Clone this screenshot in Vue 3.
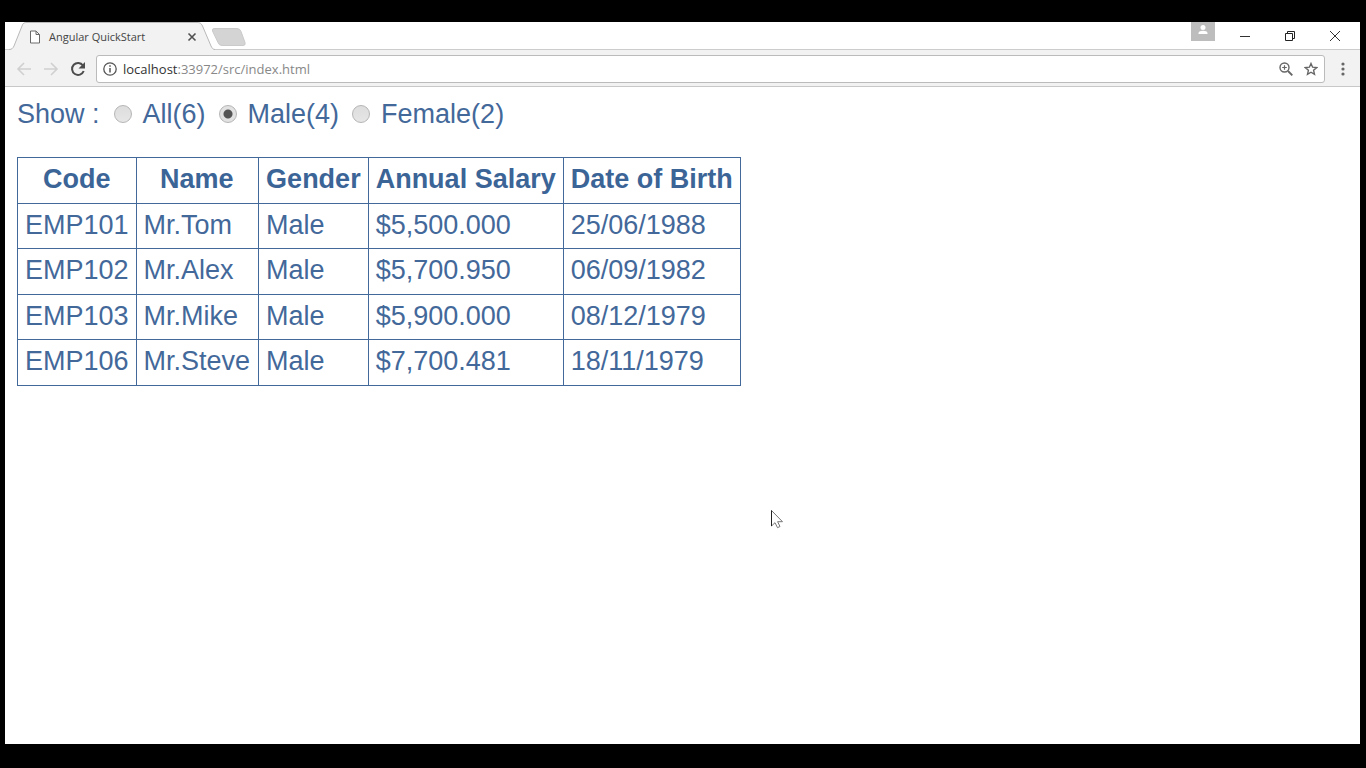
<script setup>
import { computed, ref } from 'vue'

const employees = [
  { code: 'EMP101', name: 'Mr.Tom', gender: 'Male', salary: '$5,500.000', birth: '25/06/1988' },
  { code: 'EMP102', name: 'Mr.Alex', gender: 'Male', salary: '$5,700.950', birth: '06/09/1982' },
  { code: 'EMP103', name: 'Mr.Mike', gender: 'Male', salary: '$5,900.000', birth: '08/12/1979' },
  { code: 'EMP106', name: 'Mr.Steve', gender: 'Male', salary: '$7,700.481', birth: '18/11/1979' },
]
const options = [
  { value: 'All', count: 6 },
  { value: 'Male', count: 4 },
  { value: 'Female', count: 2 },
]
const selected = ref('Male')
const rows = computed(() =>
  selected.value === 'All' ? employees : employees.filter((e) => e.gender === selected.value),
)
</script>

<template>
  <div class="screen">
    <div class="window">
      <header class="tabstrip">
        <div class="tab">
          <svg class="tab-shape" viewBox="0 0 206 28" aria-hidden="true">
            <path d="M0 27.500C3 27.500 4 26 5 24L13 4C14 1 15 .5 18 .5H188C191 .5 192 1 193.500 4L202 24C203 26 204 27.500 206 27.500V28H0Z" fill="#f2f2f2" />
            <path d="M0 27.500C3 27.500 4 26 5 24L13 4C14 1 15 .5 18 .5H188C191 .5 192 1 193.500 4L202 24C203 26 204 27.500 206 27.500" fill="none" stroke="#b9b9b9" />
          </svg>
          <svg class="page-icon" viewBox="0 0 12 14" aria-hidden="true">
            <path d="M1.500 1H7l3.500 3.500V13h-9ZM7 1v3.500h3.500" fill="#fff" stroke="#6a6a6a" />
          </svg>
          <span class="tab-title">Angular QuickStart</span>
          <button class="tab-close" aria-label="Close tab">
            <svg viewBox="0 0 10 10" width="10" height="10"><path d="M1.500 1.500l7 7M8.500 1.500l-7 7" stroke="#505050" stroke-width="1.600" /></svg>
          </button>
        </div>
        <button class="new-tab" aria-label="New tab">
          <svg viewBox="0 0 36 18" width="36" height="18"><path d="M3 .5H26q3 0 4 3l4 11q1 3-2 3H11q-3 0-4-3L1.500 3Q1 .5 3 .5Z" fill="#d4d4d4" stroke="#cacaca" /></svg>
        </button>
        <div class="controls">
          <button class="user" aria-label="Profile">
            <svg viewBox="0 0 24 19" width="24" height="19"><circle cx="12" cy="5.500" r="2.500" fill="#fff" /><path d="M7.500 12V11c0-3 9-3 9 0v1Z" fill="#fff" /></svg>
          </button>
          <button class="win" aria-label="Minimize">
            <svg viewBox="0 0 12 12" width="12" height="12"><path d="M1 6.500h10" stroke="#333" /></svg>
          </button>
          <button class="win" aria-label="Restore">
            <svg viewBox="0 0 12 12" width="12" height="12"><path d="M1.500 3.500h7v7h-7ZM3.500 3.500v-2h7v7h-2" fill="none" stroke="#222" /></svg>
          </button>
          <button class="win" aria-label="Close">
            <svg viewBox="0 0 12 12" width="12" height="12"><path d="M1 1l10 10M11 1L1 11" stroke="#333" /></svg>
          </button>
        </div>
      </header>

      <nav class="toolbar">
        <button class="tool" aria-label="Back">
          <svg viewBox="0 0 16 16" width="16" height="16"><path d="M15 8H2M8 2L2 8l6 6" fill="none" stroke="#d0d0d0" stroke-width="1.600" /></svg>
        </button>
        <button class="tool" aria-label="Forward">
          <svg viewBox="0 0 16 16" width="16" height="16"><path d="M1 8h13M8 2l6 6-6 6" fill="none" stroke="#d0d0d0" stroke-width="1.600" /></svg>
        </button>
        <button class="tool" aria-label="Reload">
          <svg viewBox="0 0 16 16" width="16" height="16"><path d="M13 4.500A6 6 0 1 0 13.700 10" fill="none" stroke="#4c4c4c" stroke-width="2" /><path d="M15 1v6.500H8.500Z" fill="#4c4c4c" /></svg>
        </button>
        <div class="address">
          <svg viewBox="0 0 14 14" width="14" height="14" aria-hidden="true"><circle cx="7" cy="7" r="6.200" fill="none" stroke="#555" stroke-width="1.300" /><path d="M7 6v4.500M7 3.300v1.500" stroke="#555" stroke-width="1.500" /></svg>
          <a class="url" href="#"><span class="host">localhost</span>:33972/src/index.html</a>
          <button class="tool" aria-label="Zoom">
            <svg viewBox="0 0 14 14" width="14" height="14"><circle cx="5.500" cy="5.500" r="4.500" fill="none" stroke="#666" stroke-width="1.400" /><path d="M9 9l4.300 4.300" stroke="#666" stroke-width="1.900" /><path d="M3.200 5.500h4.600M5.500 3.200v4.600" stroke="#666" stroke-width="1.200" /></svg>
          </button>
          <button class="tool" aria-label="Bookmark">
            <svg viewBox="0 0 14 14" width="14" height="14"><path d="M7 1.500l1.600 3.700 4.100.4-3.100 2.700.9 4L7 10.200l-3.500 2.100.9-4-3.100-2.700 4.100-.4Z" fill="none" stroke="#666" stroke-width="1.400" /></svg>
          </button>
        </div>
        <button class="tool menu" aria-label="Menu">
          <svg viewBox="0 0 4 14" width="4" height="14"><circle cx="2" cy="2" r="1.600" fill="#666" /><circle cx="2" cy="7" r="1.600" fill="#666" /><circle cx="2" cy="12" r="1.600" fill="#666" /></svg>
        </button>
      </nav>

      <main class="page">
        <div class="filter">
          <span class="caption">Show :</span>
          <label v-for="o in options" :key="o.value" class="option">
            <input v-model="selected" type="radio" name="gender" :value="o.value" />
            <span>{{ o.value }}({{ o.count }})</span>
          </label>
        </div>
        <table>
          <thead>
            <tr>
              <th>Code</th>
              <th>Name</th>
              <th>Gender</th>
              <th>Annual Salary</th>
              <th>Date of Birth</th>
            </tr>
          </thead>
          <tbody>
            <tr v-for="e in rows" :key="e.code">
              <td>{{ e.code }}</td>
              <td>{{ e.name }}</td>
              <td>{{ e.gender }}</td>
              <td>{{ e.salary }}</td>
              <td>{{ e.birth }}</td>
            </tr>
          </tbody>
        </table>
      </main>
    </div>
    <svg class="pointer" viewBox="0 0 14 20" aria-hidden="true">
      <path d="M1.500 1.500V17l3.500-3.300 2.500 5 2.500-1.200-2.400-4.800h4.900Z" fill="#fff" stroke="#777" />
      <path d="M1.500 1.500V17" stroke="#222" />
    </svg>
  </div>
</template>

<style>
body {
  margin: 0;
  background: #000;
}
</style>

<style scoped>
.screen {
  box-sizing: border-box;
  position: relative;
  display: flex;
  min-height: 100vh;
  padding: 22px 6px 24px 5px;
  background: #000;
}
.window {
  display: flex;
  flex: 1;
  flex-direction: column;
  background: #fff;
}
button {
  display: flex;
  align-items: center;
  justify-content: center;
  padding: 0;
  border: 0;
  background: none;
}
.tabstrip {
  display: flex;
  box-sizing: border-box;
  height: 28px;
  border-bottom: 1px solid #ccc;
}
.tab {
  position: relative;
  display: flex;
  align-items: center;
  box-sizing: border-box;
  width: 206px;
  height: 28px;
  margin-left: 4px;
  padding: 1px 18px 0 20px;
}
.tab-shape {
  position: absolute;
  inset: 0;
}
.page-icon {
  position: relative;
  width: 12px;
  height: 14px;
  margin-right: 8px;
}
.tab-title {
  position: relative;
  flex: 1;
  color: #444;
  font: 11px/16px "Open Sans", "Noto Sans", sans-serif;
  white-space: nowrap;
}
.tab-close {
  position: relative;
}
.new-tab {
  height: 30px;
  margin-left: -4px;
}
.controls {
  display: flex;
  align-items: center;
  margin-right: 3px;
  margin-left: auto;
}
.user {
  align-self: flex-start;
  margin-right: 7px;
  background: #bdbdbd;
}
.win {
  width: 45px;
  height: 28px;
}
.toolbar {
  display: flex;
  align-items: center;
  box-sizing: border-box;
  height: 37px;
  padding: 1px 15px 0 11px;
  border-bottom: 1px solid #c8c8c8;
  background: #f2f2f2;
  gap: 11px;
}
.address {
  display: flex;
  align-items: center;
  box-sizing: border-box;
  flex: 1;
  height: 28px;
  margin-left: -1px;
  padding: 0 6px;
  border: 1px solid #bbb;
  border-radius: 3px;
  background: #fff;
  gap: 11px;
}
.url {
  flex: 1;
  margin-left: -5px;
  color: #888;
  font: 13px/18px "Open Sans", "Noto Sans", sans-serif;
  text-decoration: none;
}
.host {
  color: #333;
}
.menu {
  margin-left: 5px;
}
.page {
  padding: 9px 12px;
  color: #43689a;
  font: 27px/36px "Liberation Sans", Arial, sans-serif;
}
.filter {
  display: flex;
  align-items: center;
  gap: 14px;
  margin-bottom: 25px;
}
.option {
  display: flex;
  align-items: center;
  gap: 11px;
}
.option + .option {
  margin-left: -1px;
}
input {
  appearance: none;
  box-sizing: border-box;
  width: 18px;
  height: 18px;
  margin: 0;
  border: 1px solid #b5b5b5;
  border-radius: 50%;
  background: linear-gradient(#ddd, #e6e6e6);
}
input:checked {
  background: radial-gradient(circle, #555 0 4px, #e2e2e2 5px);
}
table {
  border-collapse: collapse;
}
th,
td {
  padding: 3px 7px 5px;
  border: 1px solid #43699b;
  text-align: left;
  white-space: nowrap;
}
th,
tbody tr:nth-child(even) td {
  padding-bottom: 6px;
}
th:nth-child(2),
td:nth-child(2) {
  padding-right: 8px;
}
th {
  color: #3b6497;
  text-align: center;
}
.pointer {
  position: absolute;
  top: 509px;
  left: 770px;
  width: 14px;
  height: 20px;
}
</style>
